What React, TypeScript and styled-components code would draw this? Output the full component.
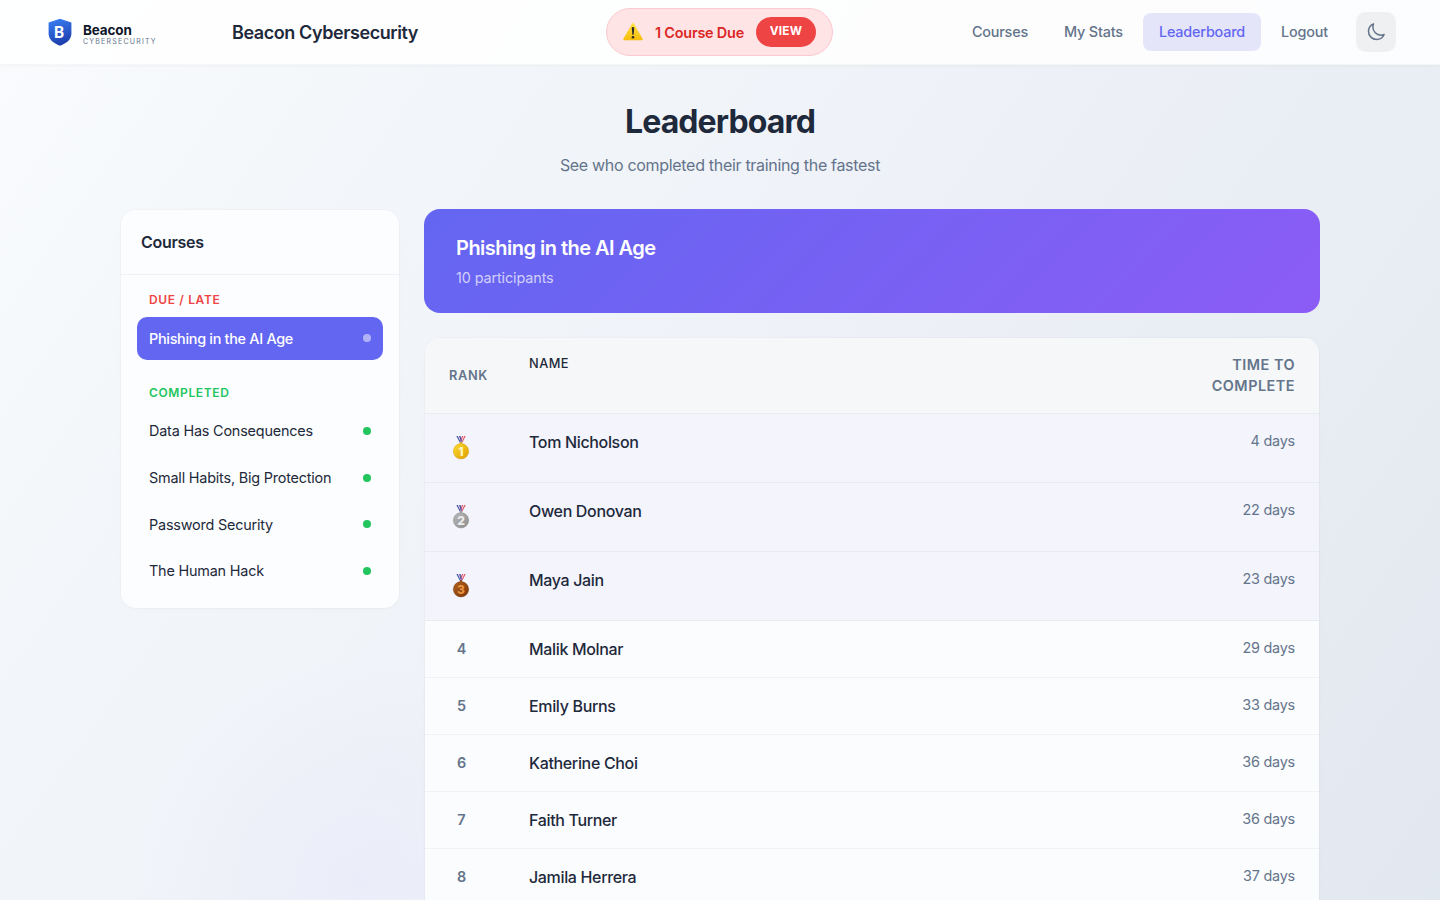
import React from "react";
import styled, { createGlobalStyle, css } from "styled-components";

const GlobalStyle = createGlobalStyle`
  *, *::before, *::after { box-sizing: border-box; }
  html, body { margin: 0; height: 100%; overflow: hidden; }
  body { font-family: Inter, "Liberation Sans", sans-serif; color: #1e293b; font-size: 16px; line-height: 1.5; }
  h1, h2, h3, p, ul { margin: 0; padding: 0; }
  button { font-family: inherit; border: 0; }
`;

const Page = styled.div`
  height: 900px;
  overflow: hidden;
  background:
    radial-gradient(circle at 25% 98%, rgba(232, 232, 252, 0.5), transparent 16%),
    linear-gradient(125deg, #f9fbfd 0%, #f2f5f9 28%, #eef1f7 50%, #e9edf4 72%, #e2e8f0 100%);
`;

const Header = styled.header`
  display: grid;
  grid-template-columns: 232px 374px 1fr auto;
  align-items: center;
  height: 65px;
  padding-right: 44px;
  background: rgba(255, 255, 255, 0.86);
  border-bottom: 1px solid rgba(0, 0, 0, 0.03);
  box-shadow: 0 1px 3px rgba(0, 0, 0, 0.03);
`;

const Brand = styled.div`
  display: flex;
  align-items: center;
  gap: 11px;
  padding-left: 48px;
`;

const BrandText = styled.div`
  padding-top: 4px;
`;

const BrandName = styled.div`
  font-size: 13.5px;
  font-weight: 700;
  line-height: 14px;
  letter-spacing: -0.15px;
  color: #0f172a;
`;

const BrandTag = styled.div`
  margin-top: 1px;
  font-size: 7px;
  line-height: 8px;
  letter-spacing: 1.22px;
  color: #64748b;
`;

const SiteTitle = styled.div`
  font-size: 18px;
  font-weight: 600;
  letter-spacing: -0.42px;
`;

const Alert = styled.div`
  justify-self: start;
  display: flex;
  align-items: center;
  width: 227px;
  height: 48px;
  padding: 0 16px 0 15px;
  border: 1px solid #fbc9cf;
  border-radius: 24px;
  background: #fee4e4;
`;

const AlertText = styled.span`
  margin-left: 11px;
  padding-top: 1px;
  flex: 1;
  font-size: 14.4px;
  font-weight: 600;
  letter-spacing: -0.2px;
  color: #dc2626;
  white-space: nowrap;
`;

const ViewButton = styled.button`
  width: 60px;
  height: 30px;
  padding: 0 0 2px;
  border-radius: 15px;
  background: #ef4444;
  color: #fff;
  font-size: 11.8px;
  font-weight: 700;
  letter-spacing: 0.3px;
`;

const Nav = styled.nav`
  display: flex;
  align-items: center;
  gap: 4px;
`;

const NavLink = styled.a<{ $active?: boolean }>`
  padding: 0 16px;
  border-radius: 8px;
  font-size: 14.4px;
  font-weight: 500;
  line-height: 38px;
  letter-spacing: -0.18px;
  color: #64748b;
  ${(p) => p.$active && css`background: #e5e5fa; color: #6366f1;`}
`;

const ThemeButton = styled.button`
  display: grid;
  place-items: center;
  width: 40px;
  height: 40px;
  margin-left: 8px;
  padding: 0 1px 0 0;
  border-radius: 10px;
  background: #eef0f2;
  color: #64748b;
`;

const Intro = styled.section`
  padding-top: 33px;
  height: 144px;
  text-align: center;
`;

const PageTitle = styled.h1`
  font-size: 32px;
  font-weight: 700;
  line-height: 48px;
  letter-spacing: -0.9px;
`;

const Subtitle = styled.p`
  margin-top: 7px;
  font-size: 16px;
  line-height: 24px;
  letter-spacing: -0.31px;
  color: #64748b;
`;

const Content = styled.main`
  display: grid;
  grid-template-columns: 280px 896px;
  gap: 24px;
  align-items: start;
  width: 1200px;
  margin: 0 auto;
`;

const Card = styled.section`
  border: 1px solid rgba(0, 0, 0, 0.015);
  border-radius: 16px;
  background: #fcfdfe;
  background-clip: padding-box;
  box-shadow: 0 1px 4px rgba(0, 0, 0, 0.015);
  overflow: hidden;
`;

const TableCard = styled(Card)`
  min-height: 662px;
`;

const SidebarTitle = styled.h2`
  padding: 20px;
  border-bottom: 1px solid #eff1f4;
  font-size: 16px;
  font-weight: 600;
  line-height: 24px;
  letter-spacing: -0.28px;
`;

const SidebarBody = styled.div`
  display: grid;
  gap: 24px;
  padding: 16px;
`;

const GroupTitle = styled.h3<{ $color: string }>`
  margin-bottom: 8px;
  padding-left: 12px;
  font-size: 12px;
  font-weight: 600;
  line-height: 18px;
  letter-spacing: 0.64px;
  color: ${(p) => p.$color};
`;

const CourseList = styled.ul`
  display: grid;
  gap: 4px;
  list-style: none;
`;

const CourseItem = styled.li<{ $selected?: boolean }>`
  display: flex;
  align-items: center;
  justify-content: space-between;
  height: 42.67px;
  padding: 0 12px;
  border-radius: 10px;
  font-size: 14.4px;
  line-height: 21px;
  letter-spacing: -0.19px;
  ${(p) => p.$selected && css`background: #6366f1; color: #fff; font-weight: 500; letter-spacing: -0.29px;`}
`;

const Dot = styled.span<{ $selected?: boolean }>`
  width: 8px;
  height: 8px;
  border-radius: 50%;
  background: ${(p) => (p.$selected ? "rgba(255,255,255,0.5)" : "#22c55e")};
`;

const Banner = styled.section`
  height: 104px;
  margin-bottom: 24px;
  padding: 23px 32px;
  border-radius: 16px;
  background: linear-gradient(135deg, #6366f1 0%, #8b5cf6 100%);
  color: #fff;
`;

const BannerTitle = styled.h2`
  font-size: 20px;
  font-weight: 600;
  line-height: 32px;
  letter-spacing: -0.52px;
`;

const BannerMeta = styled.p`
  margin-top: 3px;
  font-size: 14.4px;
  line-height: 22px;
  letter-spacing: -0.11px;
  color: rgba(255, 255, 255, 0.7);
`;

const rowGrid = css`
  display: grid;
  grid-template-columns: 64px 1fr 120px;
  column-gap: 16px;
  padding: 16px 24px;
`;

const TableHead = styled.div`
  ${rowGrid}
  height: 76px;
  border-bottom: 1px solid #e9ecef;
  background: #f5f7f8;
`;

const RankHead = styled.span`
  align-self: center;
  font-size: 12.8px;
  font-weight: 600;
  letter-spacing: 0.64px;
  color: #64748b;
`;

const NameHead = styled.span`
  font-size: 12.8px;
  font-weight: 500;
  line-height: 20px;
  letter-spacing: 0.45px;
`;

const TimeHead = styled.span`
  font-size: 14.4px;
  font-weight: 600;
  line-height: 21.4px;
  letter-spacing: 0.5px;
  text-align: right;
  color: #64748b;
`;

const Row = styled.div<{ $top?: boolean }>`
  ${rowGrid}
  height: ${(p) => (p.$top ? 69 : 57)}px;
  border-bottom: 1px solid ${(p) => (p.$top ? "#e9ebf3" : "#f0f2f5")};
  background: ${(p) => (p.$top ? "#f3f4fc" : "#fbfcfe")};
`;

const Rank = styled.span`
  width: 25px;
  text-align: center;
  font-size: 14.4px;
  font-weight: 600;
  line-height: 24px;
  color: #64748b;
`;

const Name = styled.span`
  font-size: 16px;
  font-weight: 500;
  line-height: 24px;
  letter-spacing: -0.34px;
`;

const Time = styled.span`
  text-align: right;
  font-size: 14.4px;
  line-height: 22px;
  letter-spacing: -0.22px;
  color: #64748b;
`;

const MedalIcon = styled.svg`
  display: block;
  margin: 5px 0 0 3px;
`;

const medals = [
  { light: "#ffdc2e", dark: "#dd9d00", rim: "#d09200", digit: "#fff6c4" },
  { light: "#b9b9b9", dark: "#8c8c8c", rim: "#858585", digit: "#ececec" },
  { light: "#b3601f", dark: "#7a3607", rim: "#74350a", digit: "#ea9440" },
];

const Medal = ({ place }: { place: number }) => {
  const m = medals[place - 1];
  return (
    <MedalIcon width="18" height="26" viewBox="0 0 18 26">
      <defs>
        <linearGradient id={`medal${place}`} x1="0" y1="0" x2="1" y2="1">
          <stop offset="0" stopColor={m.light} />
          <stop offset="1" stopColor={m.dark} />
        </linearGradient>
      </defs>
      <path d="M9 1h4.500L10.200 7.500H7.900z" fill="#f4f1f8" />
      <path d="M4.500 1H9l1.100 6.500H7.800z" fill="#f4f1f8" />
      <path d="M12.400 1h1.200l-3.200 6.500H9.300z" fill="#dc4c5e" />
      <path d="M10 1h1.300L8.900 6.500l-.5-1.200z" fill="#dc4c5e" />
      <path d="M4.400 1h1.400l3 6.500H7.700z" fill="#4450a6" />
      <path d="M7 1h1.500l1.300 5-.7 1.500z" fill="#4450a6" />
      <circle cx="9" cy="8" r="1.1" fill={m.dark} />
      <circle cx="9" cy="16.300" r="7.700" fill={`url(#medal${place})`} stroke={m.rim} strokeWidth=".4" />
      <text x="9" y="20.500" textAnchor="middle" fontSize="12" fontWeight="800" fontFamily="Inter" fill={m.digit}>
        {place}
      </text>
    </MedalIcon>
  );
};

const Shield = () => (
  <svg width="24" height="28" viewBox="0 0 24 28">
    <defs>
      <linearGradient id="shield" x1="0" y1="0" x2="0.3" y2="1">
        <stop offset="0" stopColor="#3b82f6" />
        <stop offset="1" stopColor="#1e40af" />
      </linearGradient>
    </defs>
    <path d="M12 .8 23.400 4.600v11c0 5.800-4.600 9.800-11.400 12.200C5.200 25.400.6 21.400.6 15.600v-11z" fill="url(#shield)" />
    <text x="11" y="20.300" textAnchor="middle" fontSize="16" fontWeight="700" fontFamily="Roboto" fill="#fff">B</text>
  </svg>
);

const Warning = () => (
  <svg width="22" height="20" viewBox="0 0 22 20">
    <defs>
      <linearGradient id="warn" x1="0" y1="0" x2="0" y2="1">
        <stop offset="0" stopColor="#ffe14a" />
        <stop offset="1" stopColor="#f7bd0a" />
      </linearGradient>
    </defs>
    <path d="M10.100 1.600c.4-.7 1.400-.7 1.800 0l8.700 15.100c.4.700-.1 1.500-.9 1.500H2.300c-.8 0-1.300-.8-.9-1.500z" fill="url(#warn)" />
    <path d="M9.800 6.200c0-1.500 2.400-1.500 2.400 0l-.5 6.100c-.1.900-1.300.9-1.400 0z" fill="#2b2b2b" />
    <circle cx="11" cy="15.200" r="1.300" fill="#2b2b2b" />
  </svg>
);

const Moon = () => (
  <svg width="20" height="20" viewBox="0 0 24 24" fill="none" stroke="currentColor" strokeWidth="1.800" strokeLinecap="round" strokeLinejoin="round">
    <path d="M21.752 15.002A9.720 9.720 0 0 1 18 15.750c-5.385 0-9.750-4.365-9.750-9.750 0-1.330.266-2.597.748-3.752A9.753 9.753 0 0 0 3 11.250C3 16.635 7.365 21 12.750 21a9.753 9.753 0 0 0 9.002-5.998Z" />
  </svg>
);

const completed = ["Data Has Consequences", "Small Habits, Big Protection", "Password Security", "The Human Hack"];

const entries: [string, number][] = [
  ["Tom Nicholson", 4],
  ["Owen Donovan", 22],
  ["Maya Jain", 23],
  ["Malik Molnar", 29],
  ["Emily Burns", 33],
  ["Katherine Choi", 36],
  ["Faith Turner", 36],
  ["Jamila Herrera", 37],
];

export default function App() {
  return (
    <>
      <GlobalStyle />
      <Page>
        <Header>
          <Brand>
            <Shield />
            <BrandText>
              <BrandName>Beacon</BrandName>
              <BrandTag>CYBERSECURITY</BrandTag>
            </BrandText>
          </Brand>
          <SiteTitle>Beacon Cybersecurity</SiteTitle>
          <Alert>
            <Warning />
            <AlertText>1 Course Due</AlertText>
            <ViewButton>VIEW</ViewButton>
          </Alert>
          <Nav>
            <NavLink>Courses</NavLink>
            <NavLink>My Stats</NavLink>
            <NavLink $active>Leaderboard</NavLink>
            <NavLink>Logout</NavLink>
            <ThemeButton aria-label="Toggle theme">
              <Moon />
            </ThemeButton>
          </Nav>
        </Header>
        <Intro>
          <PageTitle>Leaderboard</PageTitle>
          <Subtitle>See who completed their training the fastest</Subtitle>
        </Intro>
        <Content>
          <Card>
            <SidebarTitle>Courses</SidebarTitle>
            <SidebarBody>
              <div>
                <GroupTitle $color="#ef4444">DUE / LATE</GroupTitle>
                <CourseList>
                  <CourseItem $selected>
                    Phishing in the AI Age
                    <Dot $selected />
                  </CourseItem>
                </CourseList>
              </div>
              <div>
                <GroupTitle $color="#22c55e">COMPLETED</GroupTitle>
                <CourseList>
                  {completed.map((c) => (
                    <CourseItem key={c}>
                      {c}
                      <Dot />
                    </CourseItem>
                  ))}
                </CourseList>
              </div>
            </SidebarBody>
          </Card>
          <div>
            <Banner>
              <BannerTitle>Phishing in the AI Age</BannerTitle>
              <BannerMeta>10 participants</BannerMeta>
            </Banner>
            <TableCard>
              <TableHead>
                <RankHead>RANK</RankHead>
                <NameHead>NAME</NameHead>
                <TimeHead>TIME TO COMPLETE</TimeHead>
              </TableHead>
              {entries.map(([name, days], i) => (
                <Row key={name} $top={i < 3}>
                  {i < 3 ? <Medal place={i + 1} /> : <Rank>{i + 1}</Rank>}
                  <Name>{name}</Name>
                  <Time>{days} days</Time>
                </Row>
              ))}
            </TableCard>
          </div>
        </Content>
      </Page>
    </>
  );
}
